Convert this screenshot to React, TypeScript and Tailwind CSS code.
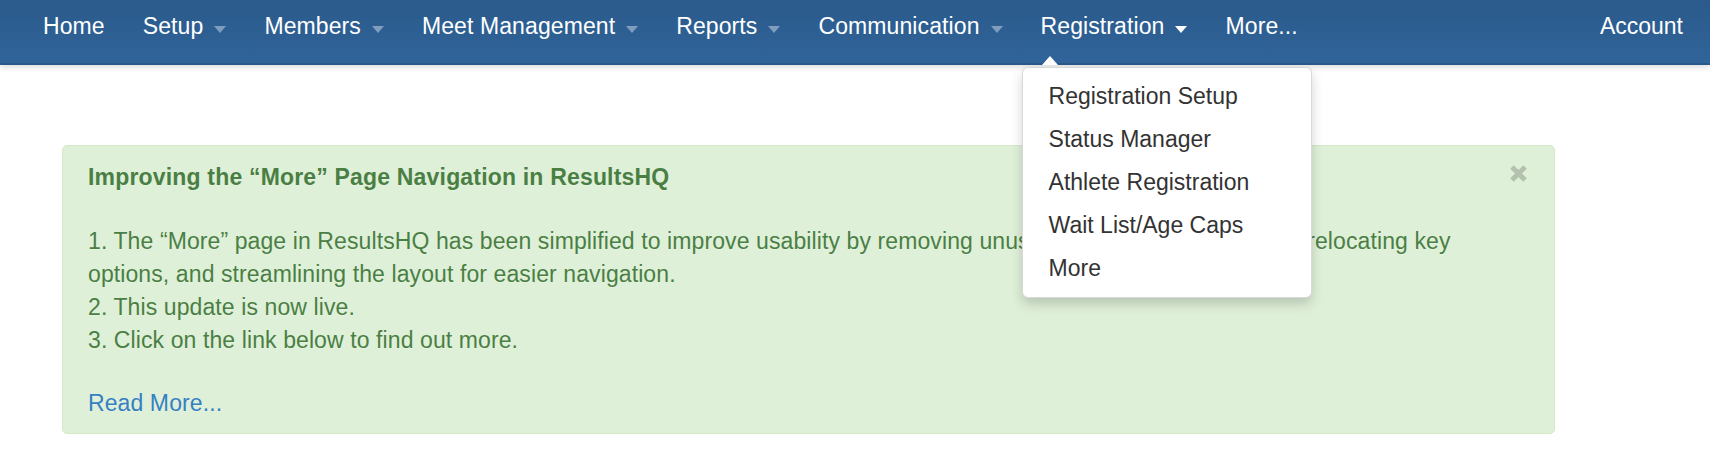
import React from 'react';

type Item = { label: string; caret: boolean; open?: boolean };

const items: Item[] = [
  { label: 'Home', caret: false },
  { label: 'Setup', caret: true },
  { label: 'Members', caret: true },
  { label: 'Meet Management', caret: true },
  { label: 'Reports', caret: true },
  { label: 'Communication', caret: true },
  { label: 'Registration', caret: true, open: true },
  { label: 'More...', caret: false },
];

const menu = ['Registration Setup', 'Status Manager', 'Athlete Registration', 'Wait List/Age Caps', 'More'];

export default function App() {
  return (
    <div className="min-h-[454px] bg-white font-['Liberation_Sans',Arial,sans-serif]">
      <nav className="relative z-10 flex h-[65px] border-b-2 border-[#2a5889] bg-linear-to-b from-[#2b5a8b] to-[#30649a] shadow-[0_2px_6px_rgba(0,0,0,0.15)]">
        <ul className="flex pl-[24px]">
          {items.map((it) => (
            <li key={it.label} className="relative">
              <a className="flex items-center px-[19px] pt-[10px] text-[23px] leading-[33px] tracking-[0.1px] text-white">
                {it.label}
                {it.caret && (
                  <span
                    className={
                      it.open
                        ? 'ml-[11px] mt-[5px] h-0 w-0 border-x-[6.5px] border-t-[7px] border-x-transparent border-t-white'
                        : 'ml-[11px] mt-[5px] h-0 w-0 border-x-[6.5px] border-t-[7px] border-x-transparent border-t-[#7f9dbf]'
                    }
                  />
                )}
              </a>
              {it.open && (
                <>
                  <span className="absolute left-[20px] top-[56px] h-0 w-0 border-x-[8.5px] border-b-[9px] border-x-transparent border-b-white" />
                  <ul className="absolute left-0 top-[67px] w-[290px] rounded-[6px] border border-black/15 bg-white py-[7px] shadow-[0_6px_12px_rgba(0,0,0,0.175)]">
                    {menu.map((m) => (
                      <li key={m} className="px-[26px] py-[5px] text-[23px] leading-[33px] text-[#333333]">
                        {m}
                      </li>
                    ))}
                  </ul>
                </>
              )}
            </li>
          ))}
        </ul>
        <div className="ml-auto pr-[27px] pt-[10px] text-[23px] leading-[33px] text-white">Account</div>
      </nav>

      <div className="relative ml-[62px] mt-[80px] w-[1493px] rounded-[5px] border border-[#d6e9c6] bg-[#dff0d8] pb-[13px] pl-[25px] pr-[45px] pt-[15px] text-[23px] leading-[33px] tracking-[0.1px] text-[#4a7f44] [text-shadow:0_1px_0_rgba(255,255,255,0.2)]">
        <button className="absolute right-[26px] top-[18px] h-[19px] w-[19px]" aria-label="close">
          <svg viewBox="0 0 19 19" width="19" height="19">
            <path d="M3 3 L16 16 M16 3 L3 16" stroke="#b3c1ae" strokeWidth="5" strokeLinecap="butt" />
          </svg>
        </button>
        <div className="font-bold tracking-[0.18px]">Improving the “More” Page Navigation in ResultsHQ</div>
        <div className="mt-[31px]">
          1. The “More” page in ResultsHQ has been simplified to improve usability by removing unused or redundant elements, relocating key options, and streamlining the layout for easier navigation.
          <br />
          2. This update is now live.
          <br />
          3. Click on the link below to find out more.
        </div>
        <div className="mt-[30px]">
          <a className="text-[#3580c2]">Read More...</a>
        </div>
      </div>
    </div>
  );
}
